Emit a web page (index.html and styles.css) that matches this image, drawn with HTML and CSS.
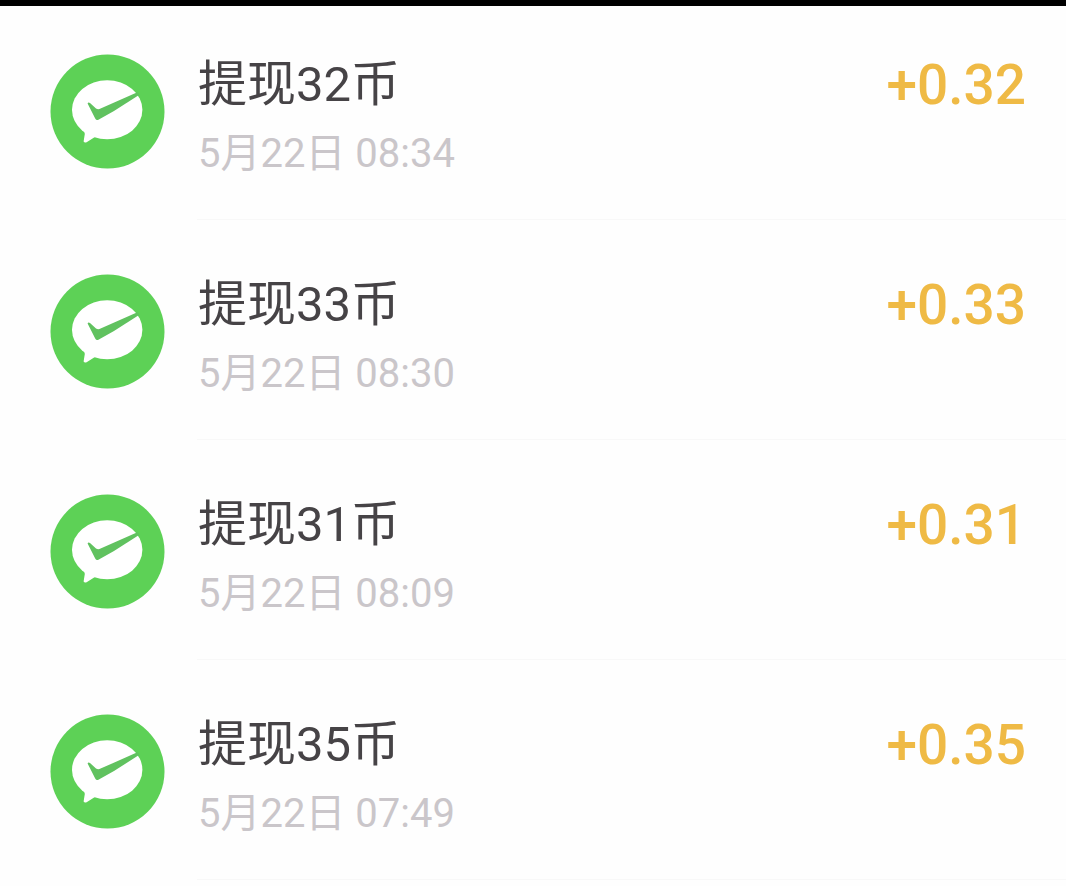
FILE: index.html
```html
<!DOCTYPE html>
<html lang="zh-CN">
<head>
    <meta charset="UTF-8">
    <meta name="viewport" content="width=device-width, initial-scale=1.0">
    <title>提现记录</title>
    <link rel="stylesheet" href="styles.css">
</head>
<body>
    <svg class="sprite" aria-hidden="true">
        <symbol id="wechat-pay" viewBox="0 0 115 115">
            <circle cx="57.5" cy="57.5" r="57" fill="#5dd156"/>
            <ellipse cx="57.2" cy="55.8" rx="35.2" ry="29.5" fill="#fff"/>
            <path d="M34 76L34.8 80L33.6 87.5Q34.6 89.4 37 88L44.5 83.2L50 80Z" fill="#fff"/>
            <path d="M37.6 49.4Q38.2 47.8 40 49L46 54.4Q48 55.8 50.6 54.6L84 39.8L87.6 38.2L89.4 40.8L64 57L48.4 65.8Q46.4 66.8 45.2 64.6Z" fill="#60c25f"/>
        </symbol>
    </svg>
    <main class="page">
        <ul class="records">
            <li class="record">
                <svg class="icon"><use href="#wechat-pay"/></svg>
                <div class="info">
                    <div class="title">提现32币</div>
                    <div class="amount">+0.32</div>
                    <time class="date">5月22日 08:34</time>
                </div>
            </li>
            <li class="record">
                <svg class="icon"><use href="#wechat-pay"/></svg>
                <div class="info">
                    <div class="title">提现33币</div>
                    <div class="amount">+0.33</div>
                    <time class="date">5月22日 08:30</time>
                </div>
            </li>
            <li class="record">
                <svg class="icon"><use href="#wechat-pay"/></svg>
                <div class="info">
                    <div class="title">提现31币</div>
                    <div class="amount">+0.31</div>
                    <time class="date">5月22日 08:09</time>
                </div>
            </li>
            <li class="record">
                <svg class="icon"><use href="#wechat-pay"/></svg>
                <div class="info">
                    <div class="title">提现35币</div>
                    <div class="amount">+0.35</div>
                    <time class="date">5月22日 07:49</time>
                </div>
            </li>
        </ul>
    </main>
</body>
</html>
```
FILE: styles.css
```css
body {
    font-family: Roboto, "Noto Sans CJK SC", sans-serif;
    background: #fefefe;
    margin: 0;
}
.sprite {
    display: none;
}
.page {
    border-top: 6px solid #000;
}
.records {
    list-style: none;
    margin: 0;
    padding: 0;
}
.record {
    display: flex;
    gap: 32px;
    padding-left: 50px;
}
.icon {
    flex: none;
    width: 115px;
    height: 115px;
    margin-top: 54px;
}
.info {
    flex: 1;
    display: grid;
    grid-template-columns: 1fr auto;
    row-gap: 9px;
    padding: 55px 40px 35px 1px;
    border-bottom: 1px solid #f8f8f8;
}
/* the first row sits under the black bar */
.record:first-child .icon {
    margin-top: 48px;
}
.record:first-child .info {
    padding-top: 49px;
}
.title {
    font-size: 49px;
    line-height: 60px;
    color: #464346;
}
.amount {
    font-size: 55px;
    font-weight: 500;
    line-height: 60px;
    color: #efba45;
}
.date {
    font-size: 40px;
    line-height: 60px;
    color: #cac6ca;
}
```
